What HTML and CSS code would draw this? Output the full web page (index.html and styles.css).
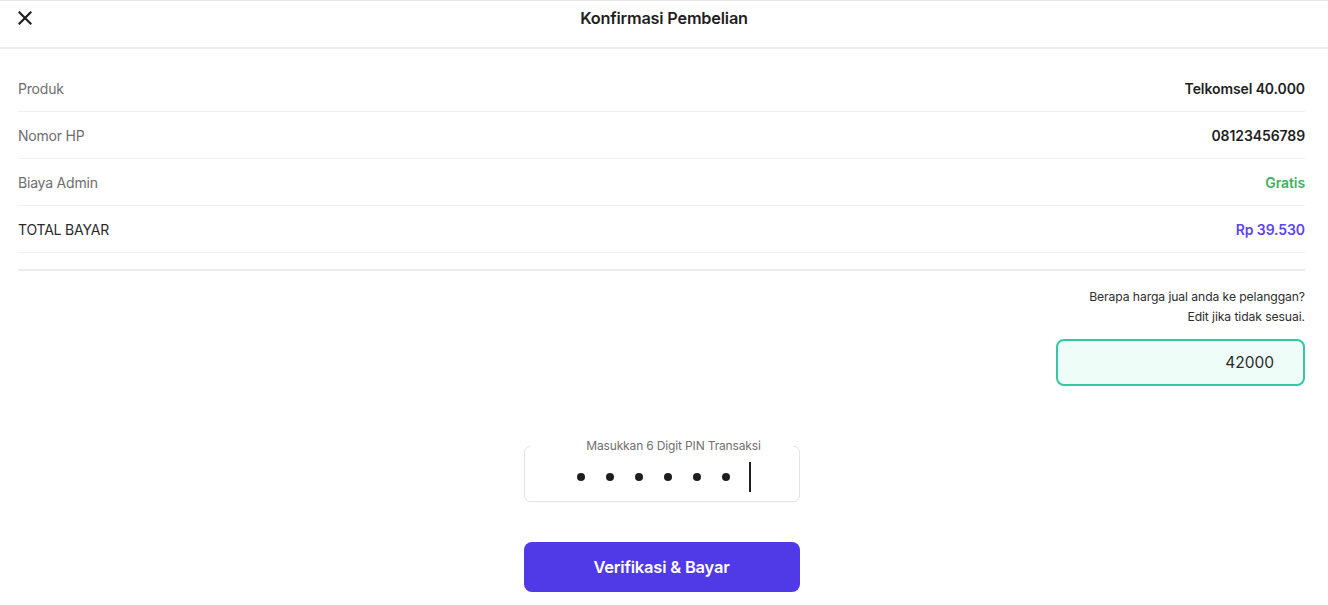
FILE: index.html
```html
<!DOCTYPE html>
<html lang="id">
<head>
<meta charset="utf-8">
<title>Konfirmasi Pembelian</title>
<link rel="stylesheet" href="styles.css">
</head>
<body>
<div class="page">
  <header class="topbar">
    <button class="close" aria-label="Tutup">
      <svg width="14" height="14" viewBox="0 0 14 14"><path d="M1.5 1.5 L12.5 12.5 M12.5 1.5 L1.5 12.5" stroke="#1f1f1f" stroke-width="2.2" stroke-linecap="square"/></svg>
    </button>
    <h1 class="title">Konfirmasi Pembelian</h1>
  </header>
  <main class="content">
    <div class="rows">
      <div class="row"><span class="label">Produk</span><span class="value">Telkomsel 40.000</span></div>
      <div class="row"><span class="label">Nomor HP</span><span class="value">08123456789</span></div>
      <div class="row"><span class="label">Biaya Admin</span><span class="value green">Gratis</span></div>
      <div class="row"><span class="label dark">TOTAL BAYAR</span><span class="value purple">Rp 39.530</span></div>
    </div>
    <div class="divider"></div>
    <div class="sell">
      <p class="sell-q">Berapa harga jual anda ke pelanggan?</p>
      <p class="sell-q">Edit jika tidak sesuai.</p>
      <div class="sell-input">42000</div>
    </div>
    <div class="pin-area">
      <fieldset class="pin-box">
        <legend class="pin-label">Masukkan 6 Digit PIN Transaksi</legend>
        <div class="dots">
          <span class="dot"></span><span class="dot"></span><span class="dot"></span>
          <span class="dot"></span><span class="dot"></span><span class="dot"></span>
          <span class="caret"></span>
        </div>
      </fieldset>
      <button class="pay">Verifikasi &amp; Bayar</button>
    </div>
  </main>
</div>
</body>
</html>
```
FILE: styles.css
```css
* { box-sizing: border-box; }
html, body { margin: 0; padding: 0; background: #fff; }
body {
  font-family: "Inter", "Liberation Sans", sans-serif;
  color: #1f1f1f;
}
.page { width: 1328px; min-height: 605px; }
.topbar {
  height: 49px;
  border-top: 1px solid #e6e6e6;
  border-bottom: 2px solid #ececec;
  display: flex;
  align-items: center;
  justify-content: center;
  position: relative;
}
.close {
  position: absolute;
  left: 18px;
  top: 10px;
  width: 16px;
  height: 16px;
  padding: 0;
  border: 0;
  background: none;
  display: flex;
}
.title {
  margin: 0;
  font-size: 16.3px;
  font-weight: 600;
  letter-spacing: -0.2px;
  margin-top: -12px;
  color: #1f1f1f;
}
.content { padding: 16px 23px 0 18px; }
.rows { display: flex; flex-direction: column; }
.row {
  height: 47px;
  display: flex;
  align-items: center;
  justify-content: space-between;
  border-bottom: 1px solid #f0f0f0;
  font-size: 14px;
}
.label { color: #6e6e6e; letter-spacing: -0.2px; }
.label.dark { color: #2a2a2a; }
.value { font-weight: 600; color: #1f1f1f; letter-spacing: -0.1px; }
.green { color: #3db35f; }
.purple { color: #5b45ee; }
.divider { height: 2px; background: #ececec; margin-top: 16px; }
.sell { display: flex; flex-direction: column; align-items: flex-end; padding-top: 16px; }
.sell-q { margin: 0; font-size: 12.2px; line-height: 20px; color: #2e2e2e; letter-spacing: -0.1px; }
.sell-input {
  margin-top: 12px;
  width: 249px;
  height: 47px;
  border: 2px solid #35c6a2;
  background: #effdf9;
  border-radius: 8px;
  display: flex;
  align-items: center;
  justify-content: flex-end;
  padding-right: 29px;
  font-size: 15.5px;
  color: #2a2a2a;
}
.pin-area { display: flex; flex-direction: column; align-items: center; padding-top: 51px; }
.pin-box {
  margin: 0;
  width: 276px;
  height: 65px;
  border: 1px solid #e3e3e3;
  border-radius: 6px;
  padding: 0;
  min-width: 0;
}
.pin-label {
  margin: 0 auto;
  padding: 0 32px 0 56px;
  font-size: 12px;
  color: #707070;
  letter-spacing: -0.15px;
  line-height: 18px;
  white-space: nowrap;
}
.dots {
  display: flex;
  align-items: center;
  justify-content: center;
  gap: 21px;
  height: 40px;
  padding-left: 5px;
  margin-top: 2px;
}
.dot { width: 8px; height: 8px; border-radius: 50%; background: #1e1e1e; }
.caret { width: 1.5px; height: 30px; background: #1e1e1e; margin-left: -2px; }
.pay {
  margin-top: 40px;
  width: 276px;
  height: 50px;
  border: 0;
  border-radius: 8px;
  background: #5039e6;
  color: #fff;
  font-family: inherit;
  font-size: 16.5px;
  font-weight: 600;
  letter-spacing: -0.2px;
}
```
